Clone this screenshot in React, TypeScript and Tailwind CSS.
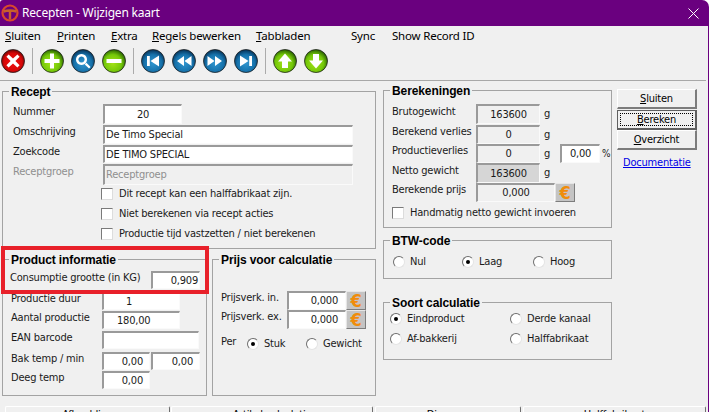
import React from 'react'

const SUNKEN = 'border-t-2 border-l-2 border-r border-b border-t-[#9a9a9a] border-l-[#9a9a9a] border-r-[#fafafa] border-b-[#fafafa]'

type BallColor = 'red' | 'green' | 'blue'

const Ball: React.FC<{ color: BallColor; children: React.ReactNode }> = ({ color, children }) => (
  <svg width={24} height={24} viewBox="0 0 24 24" className="shrink-0">
    <circle cx="12" cy="12" r="11.5" fill={`url(#ball-${color})`} stroke="#1b1b1b" strokeOpacity="0.75" />
    <g fill="#fff" stroke="none">{children}</g>
  </svg>
)

const BallDefs = () => (
  <svg width={0} height={0} className="absolute">
    <defs>
      <radialGradient id="ball-red" cx="50%" cy="55%" r="55%">
        <stop offset="0%" stopColor="#f01010" />
        <stop offset="70%" stopColor="#d80808" />
        <stop offset="100%" stopColor="#6e0404" />
      </radialGradient>
      <radialGradient id="ball-green" cx="45%" cy="60%" r="58%">
        <stop offset="0%" stopColor="#a4e218" />
        <stop offset="65%" stopColor="#74c808" />
        <stop offset="100%" stopColor="#2f6a02" />
      </radialGradient>
      <radialGradient id="ball-blue" cx="50%" cy="60%" r="58%">
        <stop offset="0%" stopColor="#2f95cf" />
        <stop offset="65%" stopColor="#1672ab" />
        <stop offset="100%" stopColor="#07365c" />
      </radialGradient>
    </defs>
  </svg>
)

const Sep = () => <div className="w-px h-[26px] bg-[#ababab] shrink-0" />

const Field: React.FC<{ value?: string; className?: string }> = ({ value, className = '' }) => (
  <div className={`${SUNKEN} flex items-center overflow-hidden whitespace-nowrap h-full ${className}`}>{value}</div>
)

const Label: React.FC<{ text: string; className: string }> = ({ text, className }) => (
  <span className={`pb-[5px] whitespace-nowrap shrink-0 ${className}`}>{text}</span>
)

const Euro = () => (
  <div className="w-[20px] h-full shrink-0 flex items-center justify-center bg-[#c4c4c4] border-t border-l border-t-[#e6e6e6] border-l-[#e6e6e6] border-b border-r border-b-[#7d7d7d] border-r-[#7d7d7d] text-[#f08c0a] text-[18px] font-bold leading-none">
    €
  </div>
)

const Check: React.FC<{ text: string }> = ({ text }) => (
  <div className="flex items-center gap-[6px] h-[14px]">
    <div className="w-[12px] h-[12px] bg-white border-t border-l border-t-[#7a7a7a] border-l-[#7a7a7a] border-b border-r border-b-[#dcdcdc] border-r-[#dcdcdc] shrink-0" />
    <span className="whitespace-nowrap">{text}</span>
  </div>
)

const Radio: React.FC<{ text: string; on?: boolean; className?: string }> = ({ text, on, className = '' }) => (
  <div className={`flex items-center gap-[5px] h-[16px] shrink-0 ${className}`}>
    <div className="w-[12px] h-[12px] rounded-full bg-white border border-t-[#6e6e6e] border-l-[#6e6e6e] border-r-[#e4e4e4] border-b-[#e4e4e4] flex items-center justify-center shrink-0">
      {on && <div className="w-[4px] h-[4px] rounded-full bg-black" />}
    </div>
    <span className="whitespace-nowrap">{text}</span>
  </div>
)

const Group: React.FC<{ title: string; className: string; children: React.ReactNode }> = ({ title, className, children }) => (
  <div className={`relative border border-[#a3a3a3] shrink-0 ${className}`}>
    <span className="absolute -top-[8px] left-[6px] bg-[#f0f0f0] px-[2px] font-['Liberation_Sans',sans-serif] text-[12px] leading-[16px] tracking-[-0.1px] font-bold text-black whitespace-nowrap">
      {title}
    </span>
    {children}
  </div>
)

const Mnemonic: React.FC<{ first: string; rest: string }> = ({ first, rest }) => (
  <span className="whitespace-nowrap">
    <span className="underline">{first}</span>
    {rest}
  </span>
)

const MENU = [
  { first: 'S', rest: 'luiten', w: 'w-[52px]' },
  { first: 'P', rest: 'rinten', w: 'w-[54px]' },
  { first: 'E', rest: 'xtra', w: 'w-[41px]' },
  { first: 'R', rest: 'egels bewerken', w: 'w-[104px]' },
  { first: 'T', rest: 'abbladen', w: 'w-[95px]' },
]

export default function App() {
  return (
    <div className="w-[709px] h-[412px] overflow-hidden bg-white font-['DejaVu_Sans_Condensed','DejaVu_Sans',sans-serif] text-[11px] tracking-[-0.2px] leading-[14px] text-[#1a1a1a]">
      <BallDefs />
      {/* title bar */}
      <div className="h-[26px] bg-[#6a007f] rounded-tr-[7px] rounded-tl-[3px] flex items-center text-white">
        <svg width={18} height={18} viewBox="0 0 18 18" className="ml-[1px] shrink-0">
          <circle cx="9" cy="9" r="7.5" fill="none" stroke="#d8482c" strokeWidth="2.2" />
          <path d="M2.5 7.5 Q9 5.5 15.5 7.5 M9 7 V15.5" fill="none" stroke="#c8602c" strokeWidth="2.4" />
        </svg>
        <span className="ml-[3px] font-['Noto_Sans',sans-serif] text-[12px] tracking-[-0.2px] whitespace-nowrap">Recepten - Wijzigen kaart</span>
        <svg width={11} height={11} viewBox="0 0 11 11" className="ml-auto mr-[10px]">
          <path d="M0.5 0.5 L10.5 10.5 M10.5 0.5 L0.5 10.5" stroke="#fff" strokeWidth="1" />
        </svg>
      </div>

      <div className="h-[386px] bg-[#f0f0f0] border-r border-r-[#6a007f] flex flex-col">
        {/* menu */}
        <div className="h-[20px] shrink-0 pl-[5px] flex items-center font-['Noto_Sans',sans-serif] tracking-[-0.2px] text-[11.5px] text-black">
          {MENU.map(m => (
            <div key={m.first} className={m.w}>
              <Mnemonic first={m.first} rest={m.rest} />
            </div>
          ))}
          <span className="w-[41px]">Sync</span>
          <span className="whitespace-nowrap">Show Record ID</span>
        </div>

        {/* toolbar */}
        <div className="h-[35px] shrink-0 pl-[1px] pb-[4px] flex items-center gap-[7px] mr-[2px] border-b border-b-[#a8a8a8]">
          <Ball color="red">
            <path d="M7.6 5.5 L12 9.6 L16.4 5.5 L18.6 7.7 L14.4 12 L18.6 16.3 L16.4 18.5 L12 14.4 L7.6 18.5 L5.4 16.3 L9.6 12 L5.4 7.7 Z" />
          </Ball>
          <Sep />
          <Ball color="green">
            <path d="M10 4.5 H14 V10 H19.5 V14 H14 V19.5 H10 V14 H4.5 V10 H10 Z" />
          </Ball>
          <Ball color="blue">
            <path d="M10.5 5 A5.5 5.5 0 1 1 10.49 5 Z M10.5 7.4 A3.1 3.1 0 1 0 10.51 7.4 Z" fillRule="evenodd" />
            <path d="M13.8 15.4 L15.4 13.8 L19.6 18 L18 19.6 Z" />
          </Ball>
          <Ball color="green">
            <rect x="4.5" y="10" width="15" height="4" />
          </Ball>
          <Sep />
          <Ball color="blue">
            <rect x="6" y="7" width="2.8" height="10" />
            <path d="M18 6.5 V17.5 L9.5 12 Z" />
          </Ball>
          <Ball color="blue">
            <path d="M12 7 V17 L5 12 Z M19.5 7 V17 L12.5 12 Z" />
          </Ball>
          <Ball color="blue">
            <path d="M12 7 V17 L19 12 Z M4.5 7 V17 L11.5 12 Z" />
          </Ball>
          <Ball color="blue">
            <rect x="15.2" y="7" width="2.8" height="10" />
            <path d="M6 6.5 V17.5 L14.5 12 Z" />
          </Ball>
          <Sep />
          <Ball color="green">
            <path d="M12 4.5 L19 12.5 H15 V19 H9 V12.5 H5 Z" />
          </Ball>
          <Ball color="green">
            <path d="M12 19.5 L19 11.5 H15 V5 H9 V11.5 H5 Z" />
          </Ball>
        </div>

        {/* main */}
        <div className="flex-1 min-h-0 flex pl-[2px]">
          {/* left column */}
          <div className="relative w-[374px] shrink-0 pt-[10px] flex flex-col">
            <Group title="Recept" className="w-[374px] h-[158px] pt-[12px] pl-[10px]">
              <div className="flex flex-col gap-[1px]">
                <div className="flex items-center h-[20px]">
                  <Label text="Nummer" className="w-[90px]" />
                  <Field value="20" className="w-[79px] justify-center bg-white" />
                </div>
                <div className="flex items-center h-[19px]">
                  <Label text="Omschrijving" className="w-[90px]" />
                  <Field value="De Timo Special" className="w-[250px] pl-[1px] bg-white" />
                </div>
                <div className="flex items-center h-[18px]">
                  <Label text="Zoekcode" className="w-[90px]" />
                  <Field value="DE TIMO SPECIAL" className="w-[250px] pl-[1px] bg-white" />
                </div>
                <div className="flex items-center h-[21px] text-[#8f8f8f]">
                  <Label text="Receptgroep" className="w-[90px]" />
                  <Field value="Receptgroep" className="w-[250px] pl-[1px]" />
                </div>
              </div>
              <div className="mt-[2px] pl-[88px] flex flex-col gap-[6px]">
                <Check text="Dit recept kan een halffabrikaat zijn." />
                <Check text="Niet berekenen via recept acties" />
                <Check text="Productie tijd vastzetten / niet berekenen" />
              </div>
            </Group>

            <div className="mt-[10px] flex gap-[5px]">
              <Group title="Product informatie" className="w-[205px] h-[137px] pt-[11px] pl-[8px]">
                <div className="flex items-center h-[18px]">
                  <Label text="Consumptie grootte (in KG)" className="w-[140px] -ml-[1px] mr-[1px]" />
                  <Field value="0,909" className="w-[49px] justify-end pr-[1px] bg-white" />
                </div>
                <div className="flex items-center h-[18px] mt-[3px]">
                  <Label text="Productie duur" className="w-[91px]" />
                  <Field value="1" className="w-[78px] pl-[22px] bg-white" />
                </div>
                <div className="flex items-center h-[18px] mt-[1px]">
                  <Label text="Aantal productie" className="w-[91px]" />
                  <Field value="180,00" className="w-[78px] pl-[13px] bg-white" />
                </div>
                <div className="flex items-center h-[18px] mt-[2px]">
                  <Label text="EAN barcode" className="w-[91px]" />
                  <Field className="w-[97px] bg-white" />
                </div>
                <div className="flex items-center h-[18px] mt-[3px]">
                  <Label text="Bak temp / min" className="w-[91px]" />
                  <Field value="0,00" className="w-[48px] justify-end pr-[6px] bg-white" />
                  <Field value="0,00" className="w-[49px] ml-[1px] justify-end pr-[6px] bg-white" />
                </div>
                <div className="flex items-center h-[18px] mt-[1px]">
                  <Label text="Deeg temp" className="w-[91px]" />
                  <Field value="0,00" className="w-[48px] justify-end pr-[6px] bg-white" />
                </div>
              </Group>

              <Group title="Prijs voor calculatie" className="w-[164px] h-[137px] pt-[31px] pl-[8px]">
                <div className="flex items-center h-[19px]">
                  <Label text="Prijsverk. in." className="w-[66px]" />
                  <Field value="0,000" className="w-[59px] justify-end pr-[7px] bg-white" />
                  <Euro />
                </div>
                <div className="flex items-center h-[19px]">
                  <Label text="Prijsverk. ex." className="w-[66px]" />
                  <Field value="0,000" className="w-[59px] justify-end pr-[7px] bg-white" />
                  <Euro />
                </div>
                <div className="flex items-center h-[18px] mt-[6px]">
                  <Label text="Per" className="w-[26px]" />
                  <Radio text="Stuk" on className="w-[59px]" />
                  <Radio text="Gewicht" />
                </div>
              </Group>
            </div>

            {/* highlight drawn over the screenshot */}
            <div className="absolute left-[-1px] top-[165px] w-[208px] h-[48px] border-[4px] border-[#e8202a]" />
          </div>

          {/* right column */}
          <div className="ml-[7px] w-[229px] shrink-0 pt-[9px] flex flex-col">
            <Group title="Berekeningen" className="w-[229px] h-[138px] pt-[13px] pl-[8px]">
              <div className="flex items-center h-[20px]">
                <Label text="Brutogewicht" className="w-[84px]" />
                <Field value="163600" className="w-[64px] justify-center" />
                <span className="pl-[4px]">g</span>
              </div>
              <div className="flex items-center h-[19px] mt-[1px]">
                <Label text="Berekend verlies" className="w-[84px]" />
                <Field value="0" className="w-[64px] justify-center" />
                <span className="pl-[4px]">g</span>
              </div>
              <div className="flex items-center h-[19px]">
                <Label text="Productieverlies" className="w-[84px]" />
                <Field value="0" className="w-[64px] justify-center" />
                <span className="pl-[4px] w-[20px]">g</span>
                <Field value="0,00" className="w-[40px] justify-center bg-white" />
                <span className="pl-[2px] text-[10px]">%</span>
              </div>
              <div className="flex items-center h-[20px]">
                <Label text="Netto gewicht" className="w-[84px]" />
                <Field value="163600" className="w-[64px] justify-center bg-[#d6d6d6]" />
                <span className="pl-[4px]">g</span>
              </div>
              <div className="flex items-center h-[19px]">
                <Label text="Berekende prijs" className="w-[84px]" />
                <Field value="0,000" className="w-[79px] justify-center" />
                <Euro />
              </div>
              <div className="mt-[4px]">
                <Check text="Handmatig netto gewicht invoeren" />
              </div>
            </Group>

            <Group title="BTW-code" className="w-[229px] h-[39px] mt-[12px] pt-[13px] pl-[9px]">
              <div className="flex">
                <Radio text="Nul" className="w-[69px]" />
                <Radio text="Laag" on className="w-[71px]" />
                <Radio text="Hoog" />
              </div>
            </Group>

            <Group title="Soort calculatie" className="w-[229px] h-[58px] mt-[23px] pt-[8px] pl-[6px]">
              <div className="grid grid-cols-[120px_1fr] gap-y-[4px]">
                <Radio text="Eindproduct" on />
                <Radio text="Derde kanaal" />
                <Radio text="Af-bakkerij" />
                <Radio text="Halffabrikaat" />
              </div>
            </Group>
          </div>

          {/* buttons */}
          <div className="ml-[5px] w-[80px] shrink-0 pt-[8px] flex flex-col text-black">
            <div className="h-[20px] flex items-center justify-center bg-[#f0f0f0] border-t border-l border-t-white border-l-white border-b-2 border-r-2 border-b-[#7c7c7c] border-r-[#7c7c7c]">
              <Mnemonic first="S" rest="luiten" />
            </div>
            <div className="h-[20px] mt-[1px] p-[2px] bg-[#f0f0f0] border border-[#5f5f5f] border-b-2 border-r-2">
              <div className="h-full flex items-center justify-center border border-dotted border-black">
                <Mnemonic first="B" rest="ereken" />
              </div>
            </div>
            <div className="h-[20px] flex items-center justify-center bg-[#f0f0f0] border-t border-l border-t-white border-l-white border-b-2 border-r-2 border-b-[#7c7c7c] border-r-[#7c7c7c]">
              <Mnemonic first="O" rest="verzicht" />
            </div>
            <span className="mt-[6px] ml-[6px] text-[#0000e6] underline whitespace-nowrap">Documentatie</span>
          </div>
        </div>

        {/* tabs, cut off by the window */}
        <div className="h-[6px] shrink-0 overflow-hidden flex pl-[5px] gap-[1px] text-black">
          <div className="w-[165px] h-[16px] shrink-0 text-center pt-[1px] border-t border-l border-t-white border-l-white border-r border-r-[#6e6e6e] rounded-t-[2px]">Afbeelding</div>
          <div className="w-[202px] h-[16px] shrink-0 text-center pt-[1px] border-t border-l border-t-white border-l-white border-r border-r-[#6e6e6e] rounded-t-[2px]">Artikel calculatie</div>
          <div className="w-[146px] ml-[1px] h-[16px] shrink-0 text-center pt-[1px] border-t border-l border-t-white border-l-white border-r border-r-[#6e6e6e] rounded-t-[2px]">Diversen</div>
          <div className="w-[183px] ml-[1px] h-[16px] shrink-0 text-center pt-[1px] border-t border-l border-t-white border-l-white border-r border-r-[#6e6e6e] rounded-t-[2px]">Halffabrikaat</div>
        </div>
      </div>
    </div>
  )
}
